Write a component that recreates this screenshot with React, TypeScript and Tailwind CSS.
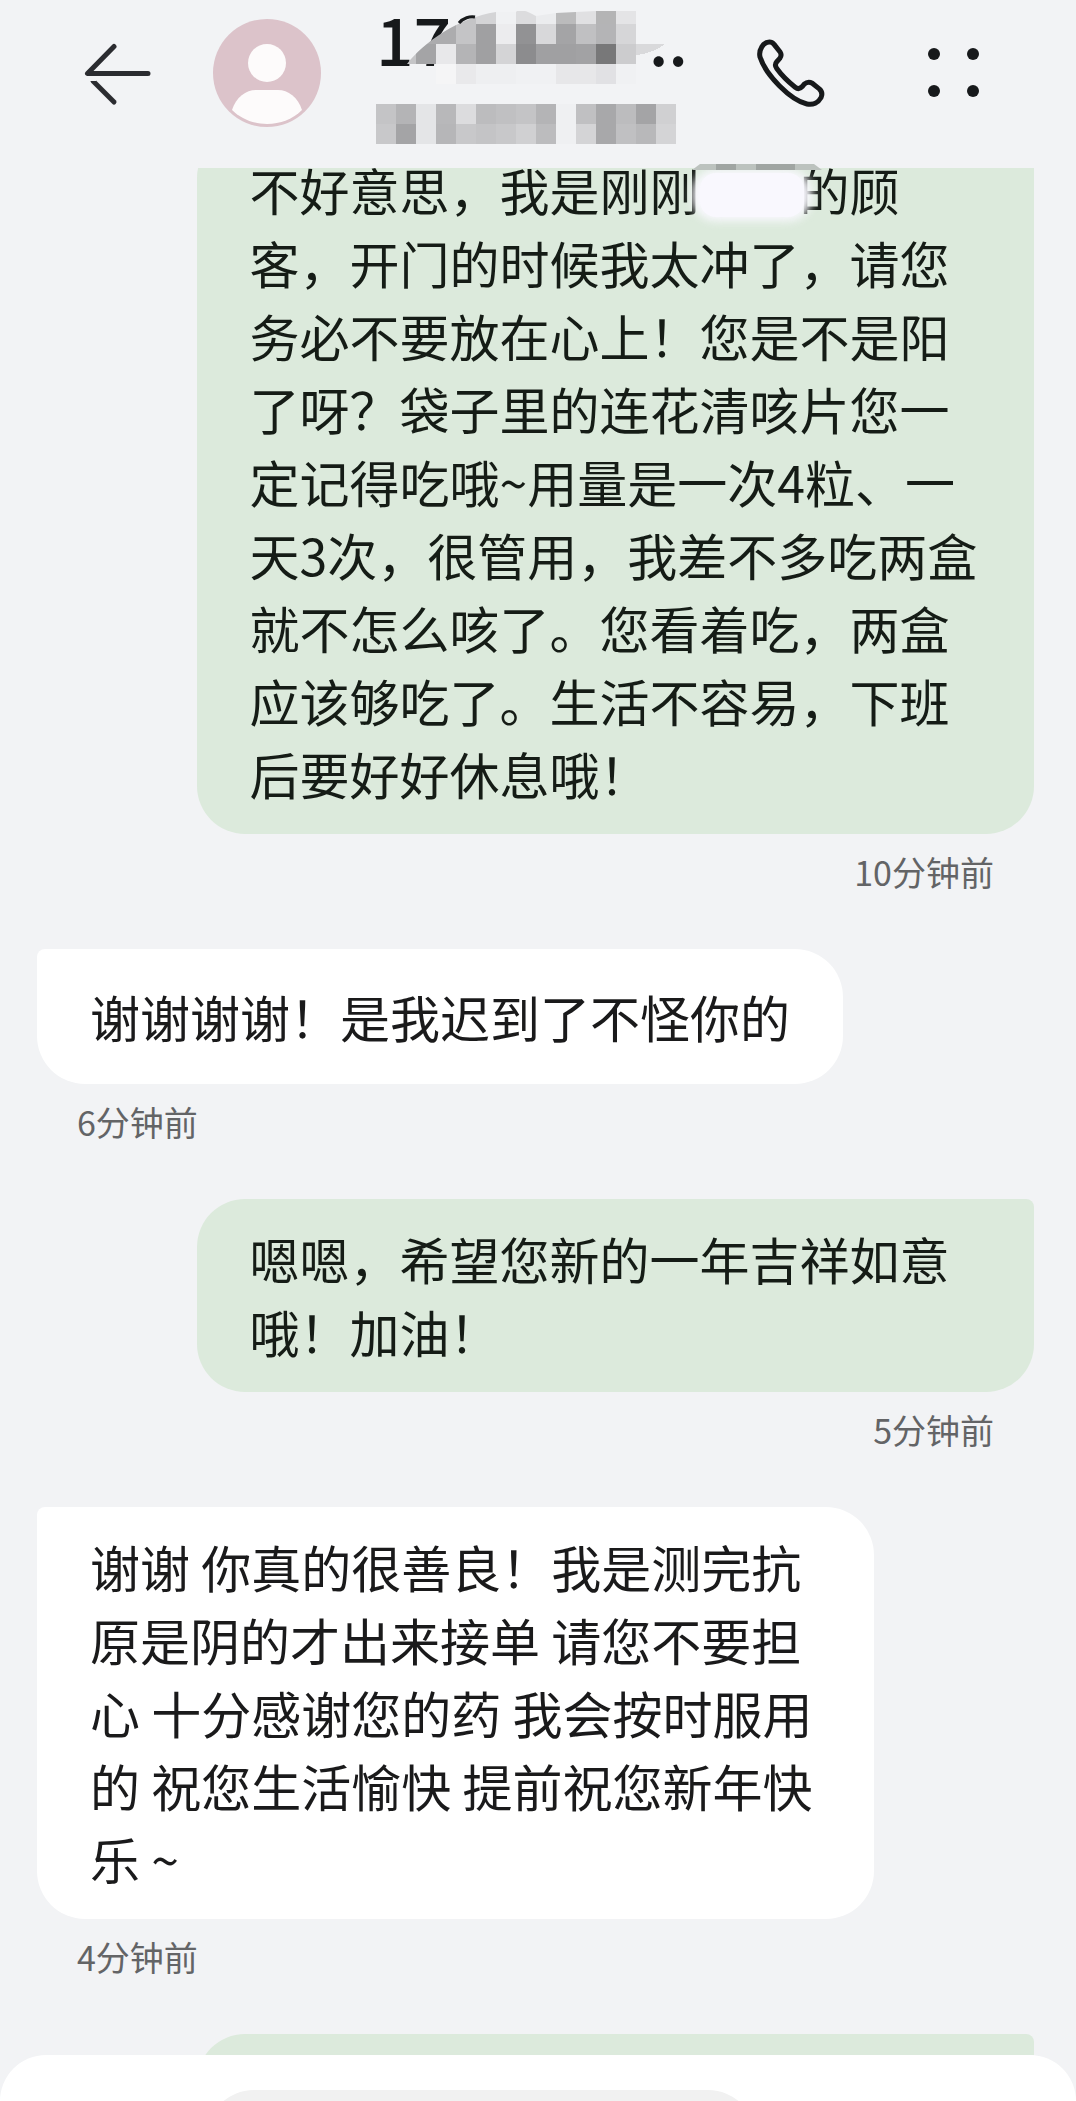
import React from 'react';
import clsx from 'clsx';

interface Message {
  mine: boolean;
  wide?: boolean;
  lines: React.ReactNode[];
  time?: string;
}

const HiddenName: React.FC = () => (
  <span className="relative inline-block h-12 w-[100px] align-middle">
    <span className="absolute -left-2 -right-3 -top-1 bottom-0 rounded-3xl bg-[#f9f8fe] blur-[5px]" />
    <span className="absolute left-0 -right-1 top-0 bottom-1 rounded-2xl bg-[#f9f8fe]" />
  </span>
);

const messages: Message[] = [
  {
    mine: true,
    wide: true,
    lines: [
      <>不好意思，我是刚刚<HiddenName />的顾</>,
      '客，开门的时候我太冲了，请您',
      '务必不要放在心上！您是不是阳',
      '了呀？袋子里的连花清咳片您一',
      '定记得吃哦~用量是一次4粒、一',
      '天3次，很管用，我差不多吃两盒',
      '就不怎么咳了。您看着吃，两盒',
      '应该够吃了。生活不容易，下班',
      '后要好好休息哦！',
    ],
    time: '10分钟前',
  },
  { mine: false, lines: ['谢谢谢谢！是我迟到了不怪你的'], time: '6分钟前' },
  { mine: true, wide: true, lines: ['嗯嗯，希望您新的一年吉祥如意', '哦！加油！'], time: '5分钟前' },
  {
    mine: false,
    wide: true,
    lines: [
      '谢谢 你真的很善良！我是测完抗',
      '原是阴的才出来接单 请您不要担',
      '心 十分感谢您的药 我会按时服用',
      '的 祝您生活愉快 提前祝您新年快',
      '乐 ~',
    ],
    time: '4分钟前',
  },
  { mine: true, wide: true, lines: [''] },
];

// 20px mosaic tiles, one array per row, null = nothing drawn
const nameRows: { y: number; h: number; tiles: (string | null)[] }[] = [
  { y: 11, h: 13, tiles: [null, null, null, null, '#c4c4c6', '#d4d4d6', '#f0f1f3', '#dcdcde', '#ebecee', '#bbbbbc', '#e0e0e2', '#b4b4b5', '#e4e4e6'] },
  { y: 24, h: 20, tiles: [null, null, '#acacae', '#acacae', '#c4c4c6', '#a0a0a2', '#ececee', '#929294', '#d8d8da', '#a4a4a6', '#c0c0c2', '#b4b4b6', '#d6d6d8'] },
  { y: 44, h: 20, tiles: [null, '#c4c4c6', '#a4a4a6', '#e8e8ea', '#b4b4b6', '#a0a0a2', '#d4d4d6', '#8c8c8e', '#a0a0a2', '#a0a0a2', '#a2a2a4', '#787879', '#ccccce'] },
];

const lowerRows: { y: number; h: number; tiles: (string | null)[] }[] = [
  { y: 64, h: 20, tiles: [null, null, null, '#f5f5f6', '#e9e9eb', '#eeeff1', '#eeeff1', '#f0f1f3', '#f0f1f3', '#e7e7e9', '#e7e7e9', '#e1e1e4', '#f0f1f3'] },
  { y: 104, h: 20, tiles: ['#c4c4c6', '#b4b4b6', '#e4e5e7', '#b8b8ba', '#dcdcde', '#bcbcbe', '#c0c0c2', '#c4c4c6', '#b4b4b6', '#eff0f2', '#c0c0c2', '#a8a8aa', '#bcbcbe', '#a4a4a6', '#d0d0d2'] },
  { y: 124, h: 20, tiles: ['#c8c8ca', '#a4a4a6', '#e4e5e7', '#b6b6b8', '#c8c8ca', '#c4c4c6', '#c8c8ca', '#d0d0d2', '#bcbcbe', '#eff0f2', '#d4d4d6', '#a8a8aa', '#c0c0c2', '#b8b8ba', '#d4d4d6'] },
];

const tiles = (rows: typeof nameRows) =>
  rows.map((row) =>
    row.tiles.map(
      (fill, i) => fill && <rect key={`${row.y}-${i}`} x={i * 20} y={row.y} width="20" height={row.h} fill={fill} />,
    ),
  );

const Mosaic: React.FC = () => (
  <svg className="absolute left-0 top-0" width="304" height="150" viewBox="0 0 304 150" shapeRendering="crispEdges" aria-hidden="true">
    <defs>
      <clipPath id="swipe">
        <path d="M31 64C48 42 82 18 120 12H140L142 10C150 10 156 14 160 16L180 13 220 11H260V64Z" />
      </clipPath>
    </defs>
    <g clipPath="url(#swipe)">{tiles(nameRows)}</g>
    <path d="M260 44H288C286 48 272 54 260 55Z" fill="#d9d9db" />
    {tiles(lowerRows)}
    <path d="M83 23C87 18 94 16 99 17" fill="none" stroke="#17191b" strokeWidth="3" shapeRendering="auto" />
  </svg>
);

const Header: React.FC = () => (
  <header className="relative flex h-[168px] shrink-0 items-start pl-[84px] pr-24">
    <button type="button" aria-label="返回" className="mt-10 shrink-0">
      <svg width="68" height="68" viewBox="0 0 68 68" fill="none" stroke="#2b2c30" strokeWidth="5" strokeLinecap="round">
        <path d="M30 6.500L3.500 33.500H64" strokeLinejoin="round" />
        <path d="M9 41L30 62" />
        <path d="M2 39.500H12" stroke="#f2f3f5" strokeWidth="3" strokeLinecap="butt" />
      </svg>
    </button>
    <svg className="ml-[61px] mt-[19px] shrink-0" width="108" height="108" viewBox="0 0 108 108" aria-hidden="true">
      <circle cx="54" cy="54" r="54" fill="#dcc3ca" />
      <circle cx="54" cy="44" r="19" fill="#fdfbfb" />
      <path d="M19 91C23 78 33 71 43 71H65C75 71 85 78 89 91C80 100 67 105 54 105S28 100 19 91Z" fill="#fdfbfb" />
    </svg>
    <div className="relative ml-[55px] h-[150px] w-[312px] shrink-0">
      <h1 className="flex justify-between text-[66px] leading-[74px] font-medium text-[#17191b]">
        <span>17</span>
        <span>..</span>
      </h1>
      <Mosaic />
    </div>
    <button type="button" aria-label="拨打电话" className="ml-auto mt-[38px] shrink-0">
      <svg width="71" height="71" viewBox="165 115 212 212" fill="none" stroke="#17191b" strokeWidth="15" strokeLinejoin="round">
        <path d="M208 127Q216 127 222 134L240 157Q246 167 239 176L230 186Q222 195 230 206C245 227 265 246 285 262Q296 271 306 260L312 253Q323 243 336 250L357 267Q369 278 362 293C354 308 338 316 320 312C270 300 197 225 180 172C175 150 190 127 208 127Z" />
      </svg>
    </button>
    <button type="button" aria-label="更多" className="ml-[102px] mt-12 shrink-0">
      <svg width="52" height="50" viewBox="0 0 52 50" fill="#17191b">
        <circle cx="6" cy="6" r="6" />
        <circle cx="45" cy="6" r="6" />
        <circle cx="6" cy="43" r="6" />
        <circle cx="45" cy="43" r="6" />
      </svg>
    </button>
    <svg className="absolute bottom-0 left-[692px] z-10 translate-y-0.5" width="130" height="6" viewBox="0 0 130 6" aria-hidden="true">
      <path d="M8 0H122L130 6H0Z" fill="#bcc2be" />
      <path d="M24 0H44V6H24ZM64 0H103V6H64Z" fill="#a0a5a2" />
    </svg>
  </header>
);

const MessageItem: React.FC<{ message: Message }> = ({ message }) => {
  const { mine, wide, lines, time } = message;
  return (
    <li className={clsx('flex flex-col', mine ? 'items-end' : 'items-start')}>
      <div
        className={clsx(
          'flex min-h-[135px] flex-col justify-center rounded-[48px] px-[53px] pt-[23px] pb-6 text-[50px] leading-[73px]',
          wide && 'w-[84%]',
          mine ? 'rounded-tr-lg bg-[#dceadc] text-[#151c16]' : 'rounded-tl-lg bg-white text-[#1a1a1b]',
        )}
      >
        {lines.map((line, i) => (
          <p key={i} className="whitespace-nowrap">{line}</p>
        ))}
      </div>
      {time && <time className="mt-3 mb-[51px] px-10 text-[34px] leading-[52px] text-[#636466]">{time}</time>}
    </li>
  );
};

const App: React.FC = () => (
  <div className="flex h-screen flex-col overflow-hidden bg-[#f2f3f5] font-['Noto_Sans_CJK_SC',sans-serif]">
    <Header />
    <main className="min-h-0 flex-1 overflow-hidden">
      <ul className="-mt-[38px] pl-[37px] pr-[42px]">
        {messages.map((message, i) => (
          <MessageItem key={i} message={message} />
        ))}
      </ul>
    </main>
    <footer className="flex h-[46px] shrink-0 items-start overflow-hidden rounded-t-[48px] bg-white pl-[206px] pr-[320px] pt-[35px]">
      <input type="text" aria-label="短信" className="h-24 w-full rounded-full bg-[#f1f1f1] px-12 outline-none" />
    </footer>
  </div>
);

export default App;
